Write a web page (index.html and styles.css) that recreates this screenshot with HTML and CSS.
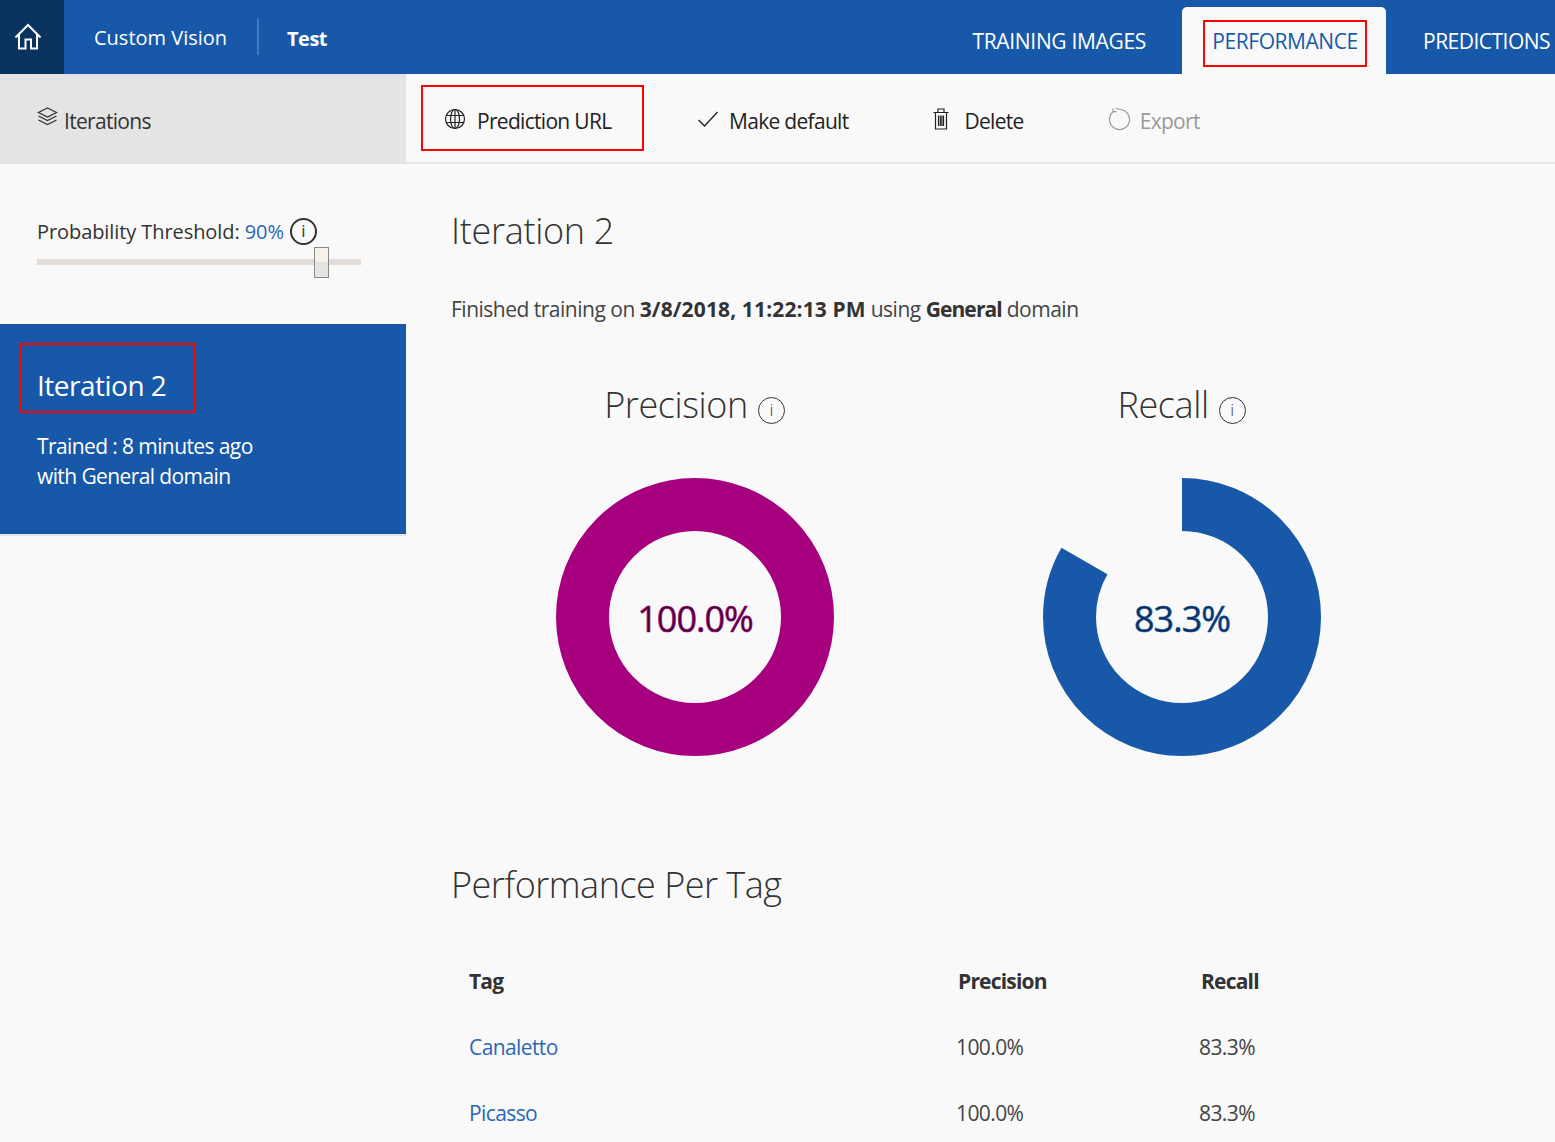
FILE: index.html
```html
<!DOCTYPE html>
<html lang="en">
<head>
    <meta charset="UTF-8">
    <title>Custom Vision - Performance</title>
    <link rel="stylesheet" href="styles.css">
</head>
<body>
    <header class="topbar">
        <a class="home">
            <svg width="30" height="30" viewBox="0 0 30 30" fill="none" stroke="#fff" stroke-width="2"><path d="M2.5 15.5 15 3l12.5 12.5M6 12.5V26.5h6.5V17.5h5.500V26.5H24V12.500"/></svg>
        </a>
        <span class="brand">Custom Vision</span>
        <span class="project">Test</span>
        <nav class="tabs">
            <a class="tab tab-training">TRAINING IMAGES</a>
            <a class="tab tab-active"><span class="tab-mark">PERFORMANCE</span></a>
            <a class="tab tab-predictions">PREDICTIONS</a>
        </nav>
    </header>

    <div class="page">
        <aside class="sidebar">
            <div class="side-head">
                <svg width="21" height="20" viewBox="0 0 21 20" fill="none" stroke="#333" stroke-width="1.300"><path d="M10.500 1 19.500 5.500l-9 4.500-9-4.500zM1.500 9l9 4.500 9-4.500M1.500 13l9 4.500 9-4.500"/></svg>
                <span class="side-title">Iterations</span>
            </div>
            <div class="threshold">
                <div class="threshold-label">
                    <span>Probability Threshold: <span class="threshold-value">90%</span></span>
                    <span class="info-bold">i</span>
                </div>
                <div class="slider"><span class="slider-thumb"></span></div>
            </div>
            <div class="iter-card">
                <div class="iter-name">Iteration 2</div>
                <p class="iter-meta">Trained : 8 minutes ago<br>with General domain</p>
            </div>
        </aside>

        <main class="content">
            <div class="toolbar">
                <button class="tool tool-url">
                    <svg width="22" height="22" viewBox="0 0 22 22" fill="none" stroke="#222" stroke-width="1.200"><circle cx="11" cy="11" r="9.500"/><ellipse cx="11" cy="11" rx="4.500" ry="9.500"/><path d="M2 7.500h18M2 14.500h18M11 1.500v19"/></svg>
                    <span class="tool-text">Prediction URL</span>
                </button>
                <button class="tool tool-default">
                    <svg width="22" height="18" viewBox="0 0 22 18" fill="none" stroke="#222" stroke-width="1.400"><path d="M1.500 10 7.500 16 20.500 2"/></svg>
                    <span class="tool-text">Make default</span>
                </button>
                <button class="tool tool-delete">
                    <svg width="18" height="22" viewBox="0 0 18 22" fill="none" stroke="#222" stroke-width="1.200"><path d="M1.500 4.500h15M6 4.500V1h6v3.500M3.500 4.500V21h11V4.500M6.500 7.500v10.500M8.300 7.500v10.500M9.900 7.500v10.500M11.500 7.500v10.500"/></svg>
                    <span class="tool-text">Delete</span>
                </button>
                <button class="tool tool-export">
                    <svg width="24" height="24" viewBox="0 0 24 24" fill="none" stroke="#999" stroke-width="1.200"><path d="M6.500 4.500A10 10 0 1 0 12 2.500M12 2.500 9 1M6 1.500v3.200h3.500"/></svg>
                    <span class="tool-text">Export</span>
                </button>
            </div>

            <div class="body">
                <h1 class="iter-title">Iteration 2</h1>
                <p class="finished">Finished training on <b>3/8/2018, 11:22:13 PM</b> using <b class="finished-domain">General</b> domain</p>

                <div class="charts">
                    <section class="chart">
                        <h2 class="chart-title">Precision <span class="info">i</span></h2>
                        <div class="donut">
                            <svg width="278" height="278" viewBox="0 0 278 278">
                                <circle class="ring ring-precision" cx="139" cy="139" r="112.500" pathLength="100" stroke-dasharray="100 0"/>
                            </svg>
                            <span class="donut-value value-precision">100.0%</span>
                        </div>
                    </section>
                    <section class="chart">
                        <h2 class="chart-title">Recall <span class="info">i</span></h2>
                        <div class="donut">
                            <svg width="278" height="278" viewBox="0 0 278 278">
                                <circle class="ring ring-recall" cx="139" cy="139" r="112.500" pathLength="100" stroke-dasharray="83.300 16.700"/>
                            </svg>
                            <span class="donut-value value-recall">83.3%</span>
                        </div>
                    </section>
                </div>

                <h2 class="per-tag">Performance Per Tag</h2>
                <table class="tag-table">
                    <thead>
                        <tr><th class="col-tag">Tag</th><th class="col-prec">Precision</th><th>Recall</th></tr>
                    </thead>
                    <tbody>
                        <tr><td><a>Canaletto</a></td><td>100.0%</td><td>83.3%</td></tr>
                        <tr><td><a>Picasso</a></td><td>100.0%</td><td>83.3%</td></tr>
                    </tbody>
                </table>
            </div>
        </main>
    </div>
</body>
</html>
```

FILE: styles.css
```css
html, body {
    margin: 0;
    padding: 0;
    height: 1142px;
    overflow: hidden;
}
body {
    font-family: 'Open Sans', 'Noto Sans', sans-serif;
    background-color: #F9F9F9;
    color: #333;
}
.topbar {
    display: flex;
    align-items: stretch;
    height: 74px;
    background: #1759A8;
    color: #fff;
}
.home {
    width: 64px;
    background: #0A335F;
    display: flex;
    align-items: center;
    justify-content: center;
    padding-right: 8px;
    box-sizing: border-box;
}
.brand {
    margin-left: 30px;
    width: 163px;
    height: 36px;
    margin-top: 19px;
    line-height: 38px;
    font-size: 20px;
    border-right: 2px solid #3F7BC0;
}
.project {
    margin-left: 28px;
    font-size: 20px;
    font-weight: 700;
    line-height: 78px;
    letter-spacing: -0.5px;
}
.tabs {
    margin-left: auto;
    display: flex;
    align-items: flex-end;
    padding-right: 5px;
}
.tab {
    font-size: 21px;
    letter-spacing: -0.45px;
    line-height: 65px;
    white-space: nowrap;
}
.tab-training {
    margin-right: 36px;
    letter-spacing: -0.32px;
}
.tab-active {
    display: flex;
    box-sizing: border-box;
    width: 204px;
    height: 67px;
    background: #F9F9F9;
    border-radius: 5px 5px 0 0;
    color: #1759A8;
    padding: 13px 0 0 21px;
}
.tab-mark {
    box-sizing: border-box;
    width: 164px;
    height: 47px;
    line-height: 39px;
    text-align: center;
    border: 2px solid #F00;
}
.tab-predictions {
    margin-left: 37px;
    letter-spacing: -0.52px;
}
.page {
    display: flex;
    height: 1068px;
}
.sidebar {
    width: 406px;
    flex-shrink: 0;
}
.side-head {
    height: 90px;
    background: #E4E4E4;
    display: flex;
    align-items: center;
    padding-left: 37px;
    gap: 6px;
    font-size: 21px;
    letter-spacing: -0.7px;
}
.side-title {
    padding-top: 3px;
}
.side-head svg {
    margin-top: -4px;
}
.threshold {
    height: 160px;
    box-sizing: border-box;
    padding: 51px 45px 0 37px;
}
.threshold-label {
    display: flex;
    align-items: center;
    gap: 6px;
    height: 32px;
    font-size: 20px;
    letter-spacing: -0.08px;
    white-space: nowrap;
}
.threshold-value {
    color: #2B67B5;
}
.info-bold {
    box-sizing: border-box;
    width: 27px;
    height: 27px;
    border: 2px solid #333;
    border-radius: 50%;
    text-align: center;
    line-height: 22px;
    font-size: 17px;
}
.slider {
    position: relative;
    height: 6px;
    margin-top: 12px;
    background: #E2DCD8;
}
.slider-thumb {
    position: absolute;
    left: 277px;
    top: -12px;
    width: 15px;
    height: 31px;
    box-sizing: border-box;
    border: 1px solid #888;
    background: linear-gradient(#F6F2E8 50%, #E4E4E0 50%);
}
.iter-card {
    height: 212px;
    box-sizing: border-box;
    background: #1759A8;
    border-bottom: 2px solid #E6E6E6;
    color: #fff;
    padding: 19px 0 0 19px;
}
.iter-name {
    box-sizing: border-box;
    width: 177px;
    height: 70px;
    border: 2px solid #F00;
    padding-left: 16px;
    line-height: 81px;
    font-size: 28px;
    letter-spacing: -0.5px;
}
.iter-meta {
    margin: 18px 0 0 18px;
    font-size: 21px;
    line-height: 30px;
    letter-spacing: -0.6px;
}
.content {
    flex: 1;
    min-width: 0;
}
.toolbar {
    height: 90px;
    box-sizing: border-box;
    border-bottom: 2px solid #E6E6E6;
    display: flex;
    padding: 11px 0 0 15px;
}
.tool {
    display: flex;
    align-items: center;
    height: 66px;
    box-sizing: border-box;
    border: 2px solid transparent;
    background: none;
    padding: 0;
    font-family: inherit;
    font-size: 21px;
    letter-spacing: -0.7px;
    color: #222;
    white-space: nowrap;
}
.tool svg {
    margin-top: 2px;
}
.tool-text {
    padding-top: 5px;
}
.tool-url {
    width: 223px;
    border-color: #F00;
    padding-left: 21px;
    gap: 11px;
}
.tool-default {
    margin-left: 51px;
    gap: 10px;
}
.tool-delete {
    margin-left: 80px;
    gap: 14px;
}
.tool-export {
    margin-left: 79px;
    gap: 9px;
    color: #999;
}
.body {
    padding: 40px 0 0 45px;
}
.iter-title {
    margin: 0;
    font-size: 36px;
    font-weight: 300;
    line-height: 54px;
    letter-spacing: -0.3px;
}
.finished {
    margin: 36px 0 0;
    font-size: 21px;
    line-height: 30px;
    letter-spacing: -0.5px;
    color: #444;
}
.finished b {
    font-weight: 700;
    letter-spacing: 0.13px;
    color: #333;
}
.finished .finished-domain {
    letter-spacing: -0.9px;
}
.charts {
    display: flex;
    margin-top: 56px;
}
.chart {
    width: 487px;
    padding-left: 105px;
    box-sizing: border-box;
}
.chart-title {
    margin: 0 0 48px -105px;
    width: 487px;
    box-sizing: content-box;
    text-align: center;
    font-size: 36px;
    font-weight: 300;
    line-height: 50px;
    letter-spacing: -0.4px;
}
.info {
    display: inline-block;
    box-sizing: border-box;
    width: 27px;
    height: 27px;
    margin-left: 1px;
    border: 1.500px solid #333;
    border-radius: 50%;
    font-size: 17px;
    line-height: 23px;
    font-weight: 300;
    letter-spacing: 0;
    vertical-align: 2px;
}
.donut {
    position: relative;
    width: 278px;
    height: 278px;
}
.donut svg {
    display: block;
}
.ring {
    fill: none;
    stroke-width: 53;
    transform: rotate(-90deg);
    transform-origin: 139px 139px;
}
.ring-precision {
    stroke: #A6007F;
}
.ring-recall {
    stroke: #1759A8;
}
.donut-value {
    position: absolute;
    left: 0;
    right: 0;
    top: 116px;
    text-align: center;
    font-size: 36px;
    line-height: 50px;
    letter-spacing: -1px;
}
.value-precision {
    color: #4A0038;
    -webkit-text-stroke: 0.6px #A6007F;
}
.value-recall {
    color: #0A2F60;
    -webkit-text-stroke: 0.6px #1759A8;
}
.per-tag {
    margin: 102px 0 0;
    font-size: 36px;
    font-weight: 300;
    line-height: 54px;
    letter-spacing: -0.5px;
}
.tag-table {
    border-collapse: collapse;
    margin-top: 36px;
    font-size: 21px;
    letter-spacing: -0.6px;
    color: #444;
}
.tag-table th, .tag-table td {
    height: 66px;
    padding: 0;
    text-align: left;
}
.tag-table th {
    font-weight: 700;
    padding-left: 2px;
    letter-spacing: -0.8px;
    color: #333;
}
.tag-table .col-tag {
    width: 487px;
    padding-left: 18px;
}
.tag-table .col-prec {
    width: 241px;
}
.tag-table td:first-child {
    padding-left: 18px;
}
.tag-table a {
    color: #2B67B5;
}
```
